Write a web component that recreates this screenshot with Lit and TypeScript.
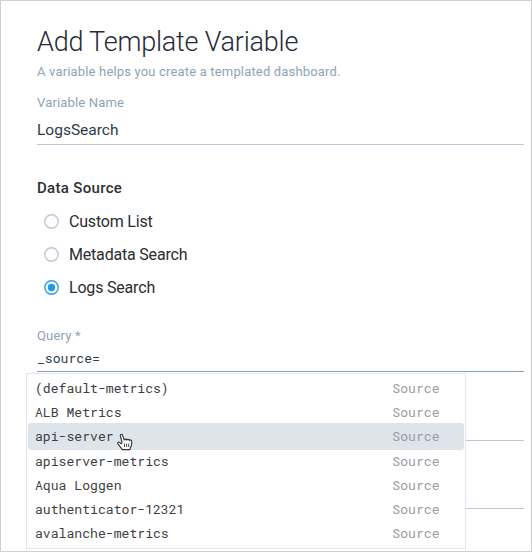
import { LitElement, html, css } from "lit";
import { customElement, property } from "lit/decorators.js";
import { classMap } from "lit/directives/class-map.js";

const OPTIONS = [
  "(default-metrics)",
  "ALB Metrics",
  "api-server",
  "apiserver-metrics",
  "Aqua Loggen",
  "authenticator-12321",
  "avalanche-metrics",
];

@customElement("radio-option")
class RadioOption extends LitElement {
  @property() label = "";
  @property({ type: Boolean }) checked = false;

  static styles = css`
    :host { display: flex; align-items: center; height: 33px; }
    .ring {
      box-sizing: border-box; width: 15px; height: 15px; margin-right: 10px;
      display: block;
    }
    .outer { fill: #fff; stroke: #bac8d7; stroke-width: 1.4; }
    .on .outer { stroke: #2e9fe6; }
    .dot { fill: #1f9ae8; }
    .text { font-size: 16px; line-height: 20px; letter-spacing: -0.19px; color: #2b2d30; }
  `;

  render() {
    return html`
      <svg class=${classMap({ ring: true, on: this.checked })} viewBox="0 0 15 15">
        <circle class="outer" cx="7.5" cy="7.5" r="6.7"></circle>
        <circle class="dot" cx="7.5" cy="7.5" r=${this.checked ? 3.7 : 0}></circle>
      </svg>
      <span class="text">${this.label}</span>
    `;
  }
}

@customElement("app-root")
class AppRoot extends LitElement {
  static styles = css`
    :host {
      display: block; box-sizing: border-box; width: 532px; height: 552px; overflow: hidden;
      border: 1px solid #cfcfcf; background: #fff; padding: 25px 7px 0 36px;
      font-family: Roboto, "Liberation Sans", sans-serif;
    }
    .title { margin: 0; height: 34px; line-height: 32px; font-size: 27px; font-weight: 300; letter-spacing: -0.21px; color: #1f2b3a; white-space: nowrap; }
    .hint { height: 24px; line-height: 24px; font-size: 13px; letter-spacing: 0.17px; color: #8ea3b9; white-space: nowrap; }
    .label { height: 38px; line-height: 38px; font-size: 13px; letter-spacing: 0.17px; color: #8ea3b9; }
    .value { height: 23px; box-sizing: border-box; border-bottom: 1px solid #b8c8d8; line-height: 16px; font-size: 15.5px; color: #2f3a49; margin-bottom: 32px; }
    .section { margin: 0; height: 28px; line-height: 22px; font-size: 15px; letter-spacing: 0.32px; font-weight: 500; color: #2f3033; }
    .radios { padding-left: 7px; margin-bottom: 21px; }
    .query-label { height: 22px; line-height: 22px; font-size: 13px; letter-spacing: 0.17px; color: #8ea3b9; }
    .query {
      box-sizing: border-box; height: 25px; line-height: 22px; border-bottom: 1px solid #8aa0b5;
      font-family: "Roboto Mono", "Liberation Mono", monospace; font-size: 13.12px; color: #2f3a49; position: relative;
    }
    .field { height: 68px; box-sizing: border-box; border-bottom: 1px solid #b8c8d8; }
    .field.first { height: 69px; }
    .menu {
      position: absolute; z-index: 1; left: -11px; top: 26px; box-sizing: border-box; width: 440px; height: 176px;
      border: 1px solid #e0e6ec; background: #fff; padding: 2px 1px 0;
    }
    .row {
      display: flex; justify-content: space-between; box-sizing: border-box; height: 24.2px; line-height: 24px;
      padding: 0 24.5px 0 7px; color: #3d3e41; position: relative; white-space: pre;
    }
    .row.active::before { content: ""; position: absolute; z-index: -1; inset: -1.4px 0; border-radius: 3px; background: #dde4ea; }
    .kind { color: #999ba3; }
    .cursor { position: absolute; left: 89px; top: 9px; width: 17px; height: 19px; }
  `;

  render() {
    return html`
      <h1 class="title">Add Template Variable</h1>
      <div class="hint">A variable helps you create a templated dashboard.</div>
      <div class="label">Variable Name</div>
      <div class="value">LogsSearch</div>
      <h2 class="section">Data Source</h2>
      <div class="radios">
        <radio-option label="Custom List"></radio-option>
        <radio-option label="Metadata Search"></radio-option>
        <radio-option label="Logs Search" checked></radio-option>
      </div>
      <div class="query-label">Query *</div>
      <div class="query">_source=
        <div class="menu">
          ${OPTIONS.map((name, i) => html`<div class=${classMap({ row: true, active: i === 2 })}><span>${name}</span><span class="kind">Source</span>${i === 2 ? this.cursor() : null}</div>`)}
        </div>
      </div>
      <div class="field first"></div>
      <div class="field"></div>
    `;
  }

  cursor() {
    return html`<svg class="cursor" viewBox="0 0 17 19">
      <path d="M4.2 10.8 2.6 9.4C1.3 8.4.2 9.8 1 10.9l3 4 1.3 1.7h7.7l.4-2c.9-1.4 1.3-2.7 1.3-4.2V8.2c0-1.5-1.8-1.7-2.3-.6-.2-1.5-2.1-1.6-2.6-.5-.3-1.3-2.2-1.3-2.6 0L5.6 2.3C5 .7 2.9 1.3 3.4 3l1.6 6.5z" fill="#fff" stroke="#333" stroke-width="1.1" stroke-linejoin="round"/>
      <path d="M7.5 10.5V14M9.6 10.5V14M11.7 10.5V14" stroke="#333" stroke-width=".9"/>
    </svg>`;
  }
}
